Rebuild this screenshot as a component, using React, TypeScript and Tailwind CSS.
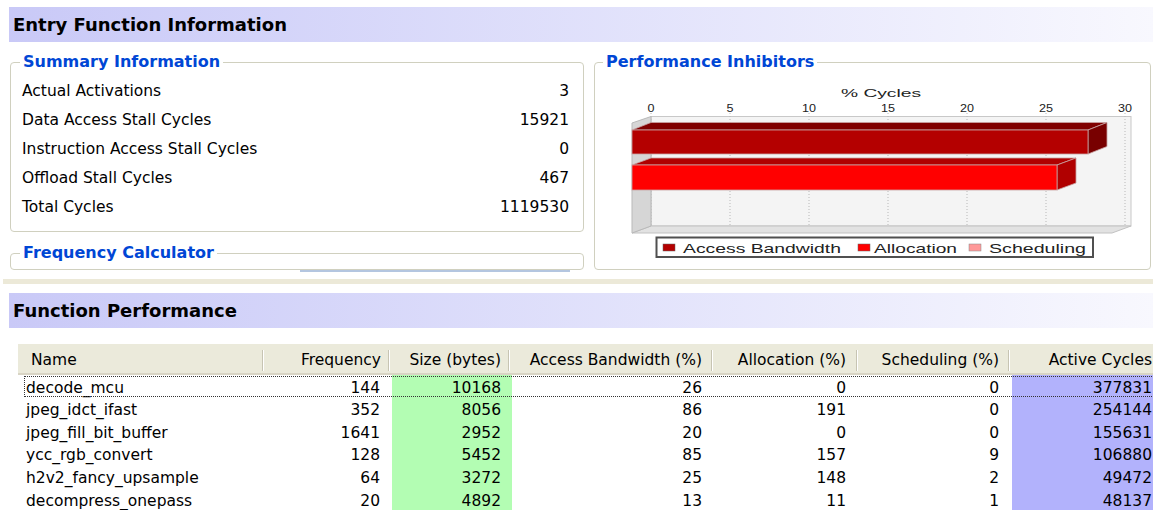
import React from "react";

type FnRow = {
  name: string;
  freq: number;
  size: number;
  access: number;
  alloc: number;
  sched: number;
  active: number;
};

const summary: [string, string][] = [
  ["Actual Activations", "3"],
  ["Data Access Stall Cycles", "15921"],
  ["Instruction Access Stall Cycles", "0"],
  ["Offload Stall Cycles", "467"],
  ["Total Cycles", "1119530"],
];

const functions: FnRow[] = [
  { name: "decode_mcu", freq: 144, size: 10168, access: 26, alloc: 0, sched: 0, active: 377831 },
  { name: "jpeg_idct_ifast", freq: 352, size: 8056, access: 86, alloc: 191, sched: 0, active: 254144 },
  { name: "jpeg_fill_bit_buffer", freq: 1641, size: 2952, access: 20, alloc: 0, sched: 0, active: 155631 },
  { name: "ycc_rgb_convert", freq: 128, size: 5452, access: 85, alloc: 157, sched: 9, active: 106880 },
  { name: "h2v2_fancy_upsample", freq: 64, size: 3272, access: 25, alloc: 148, sched: 2, active: 49472 },
  { name: "decompress_onepass", freq: 20, size: 4892, access: 13, alloc: 11, sched: 1, active: 48137 },
];

function SectionBar({ title }: { title: string }) {
  return (
    <div className="ml-[9px] h-[35px] flex items-center pl-[4px] bg-linear-to-r from-[#c9c9f7] to-[#f8f8fe] text-[18px] font-bold text-black leading-none">
      {title}
    </div>
  );
}

function GroupLegend({ children, offset }: { children: React.ReactNode; offset: string }) {
  return (
    <legend className={`${offset} px-[3px] text-[16px] leading-[20px] font-bold text-[#0046d5]`}>
      {children}
    </legend>
  );
}

function HeaderSep() {
  return <span className="w-[2px] h-[21px] border-l border-l-[#c7c4b3] border-r border-r-white mr-[2px] shrink-0" />;
}

function InhibitorChart() {
  const ticks = [0, 5, 10, 15, 20, 25, 30];
  const x0 = 651;
  const unit = 15.8;
  const chartFont = "'Liberation Sans', Arial, sans-serif";
  const edge = "#c9a3a3";
  return (
    <svg width={555} height={197} viewBox="595 72 555 197" className="block">
      <text
        x={881}
        y={97}
        textAnchor="middle"
        fontSize={11}
        textLength={80}
        lengthAdjust="spacingAndGlyphs"
        fontFamily={chartFont}
        fill="#222"
      >
        % Cycles
      </text>
      {ticks.map((t) => (
        <text
          key={`l${t}`}
          x={x0 + t * unit}
          y={112}
          textAnchor="middle"
          fontSize={10.5}
          textLength={t < 10 ? 7 : 14}
          lengthAdjust="spacingAndGlyphs"
          fontFamily={chartFont}
          fill="#222"
        >
          {t}
        </text>
      ))}

      {/* back wall */}
      <rect x={651} y={116.5} width={480} height={109.5} fill="#f4f4f4" stroke="#c8c8c8" />
      {ticks.map((t) => (
        <line
          key={`g${t}`}
          x1={x0 + t * unit}
          x2={x0 + t * unit}
          y1={113}
          y2={226}
          stroke="#b8b8b8"
          strokeDasharray="1 2"
        />
      ))}

      {/* floor */}
      <polygon points="632,233 651,226 1131,226 1112,233" fill="#e2e2e2" stroke="#c2c2c2" />
      {/* left wall */}
      <polygon points="632,123 651,116.5 651,226 632,233" fill="#d6d6d6" stroke="#b9b9b9" />

      {/* Access Bandwidth bar */}
      <polygon points="632,130 651,122.5 1107,122.5 1088,130" fill="#800000" stroke={edge} strokeWidth={0.8} />
      <polygon points="1088,130 1107,122.5 1107,146.5 1088,154" fill="#780000" stroke={edge} strokeWidth={0.8} />
      <rect x={632} y={130} width={456} height={24} fill="#b40000" stroke={edge} strokeWidth={0.8} />

      {/* Allocation bar */}
      <polygon points="632,165 651,158 1076,158 1057,165" fill="#b00000" stroke={edge} strokeWidth={0.8} />
      <polygon points="1057,165 1076,158 1076,183 1057,190" fill="#b00000" stroke={edge} strokeWidth={0.8} />
      <rect x={632} y={165} width={425} height={25} fill="#ff0000" stroke={edge} strokeWidth={0.8} />

      {/* legend */}
      <rect x={656.5} y={237.5} width={436.5} height={19.5} fill="#fff" stroke="#505050" strokeWidth={2} />
      <rect x={663} y={244} width={12} height={7} fill="#b40000" stroke="#666" strokeWidth={0.5} />
      <text x={683} y={253} fontSize={13} textLength={158} lengthAdjust="spacingAndGlyphs" fontFamily={chartFont} fill="#222">
        Access Bandwidth
      </text>
      <rect x={858} y={244} width={12} height={7} fill="#ff0000" stroke="#666" strokeWidth={0.5} />
      <text x={874} y={253} fontSize={13} textLength={83} lengthAdjust="spacingAndGlyphs" fontFamily={chartFont} fill="#222">
        Allocation
      </text>
      <rect x={969} y={244} width={12} height={7} fill="#ff9999" stroke="#888" strokeWidth={0.5} />
      <text x={989} y={253} fontSize={13} textLength={97} lengthAdjust="spacingAndGlyphs" fontFamily={chartFont} fill="#222">
        Scheduling
      </text>
    </svg>
  );
}

export default function App() {
  return (
    <div className="w-[1153px] h-[510px] overflow-hidden bg-white text-black font-['DejaVu_Sans',Verdana,sans-serif] pt-[7px]">
      <SectionBar title="Entry Function Information" />

      <div className="flex ml-[10px] mt-[10px] gap-[10px] h-[220px]">
        {/* left column */}
        <div className="w-[574px] flex flex-col">
          <fieldset className="h-[180px] border border-[#d0d0bf] rounded-[4px]">
            <GroupLegend offset="ml-[9px]">Summary Information</GroupLegend>
            <div className="pl-[11px] pr-[14px] pt-[5px]">
              {summary.map(([label, value]) => (
                <div key={label} className="h-[29px] flex items-center justify-between text-[15.5px]">
                  <span>{label}</span>
                  <span>{value}</span>
                </div>
              ))}
            </div>
          </fieldset>
          <fieldset className="mt-[11px] h-[27px] border border-[#d0d0bf] rounded-[4px]">
            <GroupLegend offset="ml-[9px]">Frequency Calculator</GroupLegend>
          </fieldset>
          <div className="ml-[290px] w-[270px] h-[2px] bg-[#b4c6e0]" />
        </div>

        {/* right column */}
        <fieldset className="w-[557px] h-[218px] border border-[#d0d0bf] rounded-[4px]">
          <GroupLegend offset="ml-[8px]">Performance Inhibitors</GroupLegend>
          <InhibitorChart />
        </fieldset>
      </div>

      <div className="ml-[3px] mt-[7px] h-[5px] bg-[#ece9d8]" />

      <div className="mt-[9px]">
        <SectionBar title="Function Performance" />
      </div>

      {/* function table */}
      <div className="ml-[18px] mt-[16px] w-[1146px] text-[15.5px]">
        <div className="flex h-[31px] pt-[4px] bg-[#ebeadb] border-b-2 border-[#d8d4c4]">
          <div className="w-[248px] flex items-center justify-between pl-[13px]">
            <span>Name</span>
            <HeaderSep />
          </div>
          <div className="w-[126px] flex items-center justify-end">
            <span className="pr-[7px]">Frequency</span>
            <HeaderSep />
          </div>
          <div className="w-[120px] flex items-center justify-end">
            <span className="pr-[7px]">Size (bytes)</span>
            <HeaderSep />
          </div>
          <div className="w-[203px] flex items-center justify-end">
            <span className="pr-[9px]">Access Bandwidth (%)</span>
            <HeaderSep />
          </div>
          <div className="w-[145px] flex items-center justify-end">
            <span className="pr-[10px]">Allocation (%)</span>
            <HeaderSep />
          </div>
          <div className="w-[152px] flex items-center justify-end">
            <span className="pr-[9px]">Scheduling (%)</span>
            <HeaderSep />
          </div>
          <div className="w-[152px] flex items-center justify-end pr-[12px]">
            <span>Active Cycles</span>
          </div>
        </div>

        {functions.map((f, i) => (
          <div key={f.name} className="relative flex h-[22.6px] leading-none">
            <div className="w-[248px] flex items-center pl-[8px] pt-[4px]">{f.name}</div>
            <div className="w-[126px] flex items-center justify-end pr-[12px] pt-[4px]">{f.freq}</div>
            <div className="w-[120px] flex items-center justify-end pr-[11px] pt-[4px] bg-[#b3fdb3]">{f.size}</div>
            <div className="w-[203px] flex items-center justify-end pr-[13px] pt-[4px]">{f.access}</div>
            <div className="w-[145px] flex items-center justify-end pr-[14px] pt-[4px]">{f.alloc}</div>
            <div className="w-[152px] flex items-center justify-end pr-[13px] pt-[4px]">{f.sched}</div>
            <div className="w-[152px] flex items-center justify-end pr-[12px] pt-[4px] bg-[#b2b2fc]">{f.active}</div>
            {i === 0 && (
              <div className="absolute left-[6px] right-0 top-[1px] bottom-[1px] border border-dotted border-[#333] pointer-events-none" />
            )}
          </div>
        ))}
      </div>
    </div>
  );
}
